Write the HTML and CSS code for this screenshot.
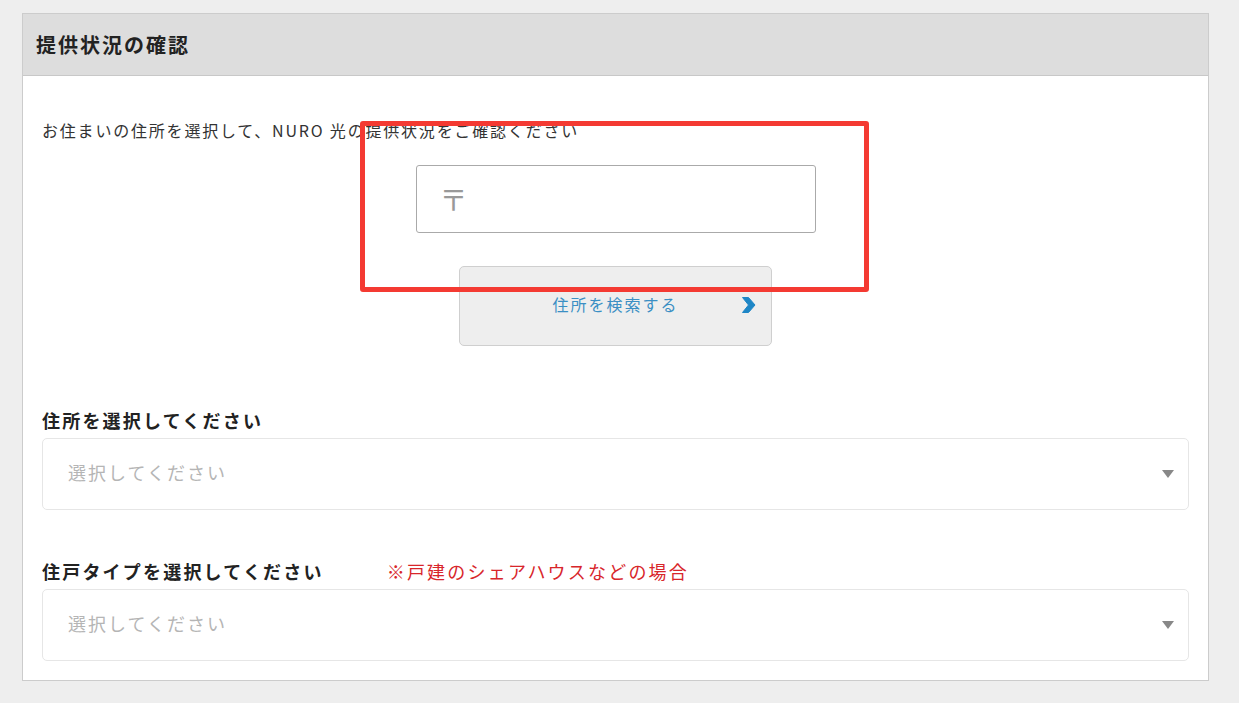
FILE: index.html
```html
<!DOCTYPE html>
<html lang="ja">
<head>
<meta charset="utf-8">
<link rel="stylesheet" href="styles.css">
</head>
<body>
<section class="panel">
  <header class="panel-head"><h1 class="panel-title">提供状況の確認</h1></header>
  <div class="panel-body">
    <p class="intro">お住まいの住所を選択して、NURO 光の提供状況をご確認ください</p>
    <div class="zip"><span class="zip-mark">〒</span></div>
    <button class="search-btn" type="button">住所を検索する
      <svg class="chev" viewBox="0 0 15 18" width="15" height="18"><path d="M1.5 1.5 L7.5 1.5 L14 9 L7.5 16.5 L1.5 16.5 L7.5 9 Z" fill="#1e86c6" stroke="#1e86c6" stroke-width="1" stroke-linejoin="round"/></svg>
    </button>
    <h2 class="label">住所を選択してください</h2>
    <div class="select"><span class="placeholder">選択してください</span><span class="caret"></span></div>
    <h2 class="label label-two">住戸タイプを選択してください<span class="note">※戸建のシェアハウスなどの場合</span></h2>
    <div class="select"><span class="placeholder">選択してください</span><span class="caret"></span></div>
    <div class="highlight"></div>
  </div>
</section>
</body>
</html>
```
FILE: styles.css
```css
html, body {
  margin: 0;
  padding: 0;
  background: #eeeeee;
  font-family: "Noto Sans CJK JP", "Noto Sans", "Liberation Sans", sans-serif;
  color: #333;
}
.panel {
  box-sizing: border-box;
  margin: 13px 0 0 22px;
  width: 1187px;
  height: 668px;
  border: 1px solid #cccccc;
  background: #fff;
}
.panel-head {
  box-sizing: border-box;
  height: 62px;
  background: #dddddd;
  border-bottom: 1px solid #c8c8c8;
  display: flex;
  align-items: center;
  padding-left: 13px;
}
.panel-title {
  margin: 0;
  font-size: 20px;
  letter-spacing: 2px;
  font-weight: bold;
  color: #222;
  line-height: 24px;
}
.panel-body {
  position: relative;
  padding: 42px 19px 19px 19px;
}
.intro {
  margin: 0;
  font-size: 16px;
  letter-spacing: 1.8px;
  line-height: 24px;
  color: #333;
}
.zip {
  box-sizing: border-box;
  width: 400px;
  height: 68px;
  margin: 23px auto 0;
  border: 1px solid #aaaaaa;
  border-radius: 3px;
  display: flex;
  align-items: center;
  padding-left: 23px;
}
.zip-mark {
  font-size: 28px;
  color: #999;
  line-height: 1;
}
.search-btn {
  position: relative;
  display: block;
  box-sizing: border-box;
  width: 313px;
  height: 80px;
  margin: 33px auto 0;
  background: #eeeeee;
  border: 1px solid #cfcfcf;
  border-radius: 5px;
  font-family: inherit;
  font-size: 16px;
  letter-spacing: 2px;
  color: #3a8fc4;
  padding: 0 0 5px 0;
}
.chev {
  position: absolute;
  right: 15px;
  top: 29px;
}
.label {
  margin: 62px 0 0 0;
  font-size: 18px;
  letter-spacing: 2.2px;
  line-height: 24px;
  font-weight: bold;
  color: #222;
}
.label-two {
  margin-top: 49px;
  display: flex;
}
.note {
  margin-left: 63px;
  font-weight: normal;
  color: #d8262b;
  letter-spacing: 2.2px;
}
.select {
  box-sizing: border-box;
  height: 72px;
  margin-top: 6px;
  border: 1px solid #e6e6e6;
  border-radius: 5px;
  display: flex;
  align-items: center;
  justify-content: space-between;
  padding: 0 14px 5px 25px;
}
.placeholder {
  font-size: 18px;
  letter-spacing: 2px;
  color: #b5b5b5;
}
.caret {
  width: 0;
  height: 0;
  border-left: 6px solid transparent;
  border-right: 6px solid transparent;
  border-top: 8px solid #888;
  margin-top: 5px;
}
.highlight {
  position: absolute;
  left: 337px;
  top: 45px;
  width: 509px;
  height: 171px;
  box-sizing: border-box;
  border: 5px solid #f43a32;
  border-radius: 3px;
  pointer-events: none;
}
```
